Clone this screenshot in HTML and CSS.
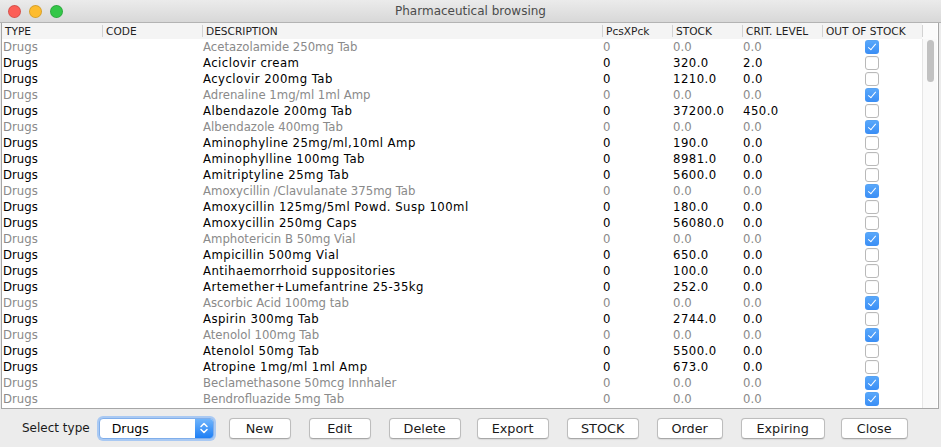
FILE: index.html
```html
<!DOCTYPE html>
<html>
<head>
<meta charset="utf-8">
<title>Pharmaceutical browsing</title>
<link rel="stylesheet" href="styles.css">
</head>
<body>
<div class="window">
  <div class="titlebar">
    <div class="lights">
      <span class="light red"></span>
      <span class="light yellow"></span>
      <span class="light green"></span>
    </div>
    <div class="title">Pharmaceutical browsing</div>
    <div class="lights spacer"></div>
  </div>

  <div class="table">
    <div class="thead-row">
      <div class="thead">
        <div class="th">TYPE</div>
        <div class="th sep">CODE</div>
        <div class="th sep">DESCRIPTION</div>
        <div class="th sep">PcsXPck</div>
        <div class="th sep">STOCK</div>
        <div class="th sep">CRIT. LEVEL</div>
        <div class="th sep">OUT OF STOCK</div>
      </div>
      <div class="corner"></div>
    </div>
    <div class="tbody-row">
      <div class="rows">
        <div class="row dim"><span>Drugs</span><span></span><span>Acetazolamide 250mg Tab</span><span>0</span><span>0.0</span><span>0.0</span><span class="chk"><i class="cb on"></i></span></div>
        <div class="row"><span>Drugs</span><span></span><span>Aciclovir cream</span><span>0</span><span>320.0</span><span>2.0</span><span class="chk"><i class="cb"></i></span></div>
        <div class="row"><span>Drugs</span><span></span><span>Acyclovir 200mg Tab</span><span>0</span><span>1210.0</span><span>0.0</span><span class="chk"><i class="cb"></i></span></div>
        <div class="row dim"><span>Drugs</span><span></span><span>Adrenaline 1mg/ml 1ml Amp</span><span>0</span><span>0.0</span><span>0.0</span><span class="chk"><i class="cb on"></i></span></div>
        <div class="row"><span>Drugs</span><span></span><span>Albendazole 200mg Tab</span><span>0</span><span>37200.0</span><span>450.0</span><span class="chk"><i class="cb"></i></span></div>
        <div class="row dim"><span>Drugs</span><span></span><span>Albendazole 400mg Tab</span><span>0</span><span>0.0</span><span>0.0</span><span class="chk"><i class="cb on"></i></span></div>
        <div class="row"><span>Drugs</span><span></span><span>Aminophyline 25mg/ml,10ml Amp</span><span>0</span><span>190.0</span><span>0.0</span><span class="chk"><i class="cb"></i></span></div>
        <div class="row"><span>Drugs</span><span></span><span>Aminophylline 100mg Tab</span><span>0</span><span>8981.0</span><span>0.0</span><span class="chk"><i class="cb"></i></span></div>
        <div class="row"><span>Drugs</span><span></span><span>Amitriptyline 25mg Tab</span><span>0</span><span>5600.0</span><span>0.0</span><span class="chk"><i class="cb"></i></span></div>
        <div class="row dim"><span>Drugs</span><span></span><span>Amoxycillin /Clavulanate 375mg Tab</span><span>0</span><span>0.0</span><span>0.0</span><span class="chk"><i class="cb on"></i></span></div>
        <div class="row"><span>Drugs</span><span></span><span>Amoxycillin 125mg/5ml Powd. Susp 100ml</span><span>0</span><span>180.0</span><span>0.0</span><span class="chk"><i class="cb"></i></span></div>
        <div class="row"><span>Drugs</span><span></span><span>Amoxycillin 250mg Caps</span><span>0</span><span>56080.0</span><span>0.0</span><span class="chk"><i class="cb"></i></span></div>
        <div class="row dim"><span>Drugs</span><span></span><span>Amphotericin B 50mg Vial</span><span>0</span><span>0.0</span><span>0.0</span><span class="chk"><i class="cb on"></i></span></div>
        <div class="row"><span>Drugs</span><span></span><span>Ampicillin 500mg Vial</span><span>0</span><span>650.0</span><span>0.0</span><span class="chk"><i class="cb"></i></span></div>
        <div class="row"><span>Drugs</span><span></span><span>Antihaemorrhoid suppositories</span><span>0</span><span>100.0</span><span>0.0</span><span class="chk"><i class="cb"></i></span></div>
        <div class="row"><span>Drugs</span><span></span><span>Artemether+Lumefantrine 25-35kg</span><span>0</span><span>252.0</span><span>0.0</span><span class="chk"><i class="cb"></i></span></div>
        <div class="row dim"><span>Drugs</span><span></span><span>Ascorbic Acid 100mg tab</span><span>0</span><span>0.0</span><span>0.0</span><span class="chk"><i class="cb on"></i></span></div>
        <div class="row"><span>Drugs</span><span></span><span>Aspirin 300mg Tab</span><span>0</span><span>2744.0</span><span>0.0</span><span class="chk"><i class="cb"></i></span></div>
        <div class="row dim"><span>Drugs</span><span></span><span>Atenolol 100mg Tab</span><span>0</span><span>0.0</span><span>0.0</span><span class="chk"><i class="cb on"></i></span></div>
        <div class="row"><span>Drugs</span><span></span><span>Atenolol 50mg Tab</span><span>0</span><span>5500.0</span><span>0.0</span><span class="chk"><i class="cb"></i></span></div>
        <div class="row"><span>Drugs</span><span></span><span>Atropine 1mg/ml 1ml Amp</span><span>0</span><span>673.0</span><span>0.0</span><span class="chk"><i class="cb"></i></span></div>
        <div class="row dim"><span>Drugs</span><span></span><span>Beclamethasone 50mcg Innhaler</span><span>0</span><span>0.0</span><span>0.0</span><span class="chk"><i class="cb on"></i></span></div>
        <div class="row dim"><span>Drugs</span><span></span><span>Bendrofluazide 5mg Tab</span><span>0</span><span>0.0</span><span>0.0</span><span class="chk"><i class="cb on"></i></span></div>
        <div class="row dim"><span></span><span></span><span></span><span></span><span></span><span></span><span class="chk"><i class="cb on"></i></span></div>
      </div>
      <div class="vscroll"><div class="thumb"></div></div>
    </div>
  </div>

  <div class="bottombar">
    <span class="label">Select type</span>
    <div class="select">
      <span class="select-text">Drugs</span>
      <span class="select-arrow">
        <svg width="10" height="14" viewBox="0 0 10 14"><path d="M2 5.5 L5 2.5 L8 5.5 M2 8.5 L5 11.5 L8 8.5" fill="none" stroke="#fff" stroke-width="1.5" stroke-linecap="round" stroke-linejoin="round"/></svg>
      </span>
    </div>
    <button class="btn w62 first">New</button>
    <button class="btn w62">Edit</button>
    <button class="btn w72">Delete</button>
    <button class="btn w72 g16">Export</button>
    <button class="btn w72">STOCK</button>
    <button class="btn w66">Order</button>
    <button class="btn w84">Expiring</button>
    <button class="btn w67 g16">Close</button>
  </div>
</div>
</body>
</html>
```

FILE: styles.css
```css
html, body {
  margin: 0;
  padding: 0;
  background: #ececec;
}
body {
  width: 941px;
  height: 447px;
  overflow: hidden;
  font-family: "DejaVu Sans", sans-serif;
}
.window {
  display: flex;
  flex-direction: column;
  height: 447px;
}

/* title bar */
.titlebar {
  height: 22px;
  flex: none;
  display: flex;
  align-items: center;
  justify-content: space-between;
  background: linear-gradient(#ebebeb, #d8d8d8);
  border-bottom: 1px solid #b3b3b3;
}
.lights {
  display: flex;
  gap: 8px;
  padding-left: 8px;
  width: 60px;
}
.light {
  width: 11px;
  height: 11px;
  border-radius: 50%;
  border: 0.5px solid rgba(0,0,0,0.15);
}
.red { background: #fc5f57; }
.yellow { background: #fdbc2f; }
.green { background: #33c748; }
.title {
  font-size: 12px;
  color: #4b4b4b;
}

/* table */
.table {
  flex: none;
  height: 385px;
  margin-left: 1px;
  width: 936px;
  border-left: 1px solid #a6a6a6;
  border-right: 1px solid #a6a6a6;
  border-bottom: 1px solid #a6a6a6;
  background: #fff;
  display: flex;
  flex-direction: column;
  overflow: hidden;
}
.thead-row {
  display: flex;
  height: 16px;
  flex: none;
}
.thead {
  width: 920px;
  display: grid;
  grid-template-columns: 100px 100px 400px 70px 70px 80px 100px;
  background: #f4f4f4;
}
.th {
  font-size: 10.6px;
  color: #1e1e1e;
  line-height: 16px;
  padding-left: 3px;
  white-space: nowrap;
  overflow: hidden;
}
.th.sep {
  background: linear-gradient(#d3d3d3, #d3d3d3) left center / 1px 12px no-repeat;
  padding-left: 4px;
}
.corner {
  width: 15px;
  background: linear-gradient(#d3d3d3, #d3d3d3) left center / 1px 12px no-repeat, #fbfbfb;
}
.tbody-row {
  display: flex;
  flex: 1;
  min-height: 0;
}
.rows {
  width: 920px;
  overflow: hidden;
}
.row {
  display: grid;
  grid-template-columns: 100px 100px 400px 70px 70px 80px 100px;
  height: 16px;
  line-height: 16px;
  font-size: 11.7px;
  color: #000;
}
.row span {
  padding-left: 1px;
  white-space: nowrap;
  overflow: hidden;
}
.row:not(.dim) span + span {
  letter-spacing: 0.45px;
}
.row.dim { color: #8a8a8a; }
.row span.chk {
  display: flex;
  align-items: center;
  justify-content: center;
  padding-left: 0;
}
.cb {
  display: block;
  box-sizing: border-box;
  width: 14px;
  height: 14px;
  border-radius: 3px;
  border: 1px solid #b9b9b9;
  background: #fff;
  box-shadow: inset 0 1px 0 rgba(0,0,0,0.03);
}
.cb.on {
  border: none;
  background: linear-gradient(#5aa9fb, #3a8ef5);
  display: flex;
  align-items: center;
  justify-content: center;
}
.cb.on::after {
  content: "";
  width: 3px;
  height: 7px;
  border-right: 1.5px solid #fff;
  border-bottom: 1.5px solid #fff;
  transform: translate(0, -1px) rotate(40deg);
}
.vscroll {
  width: 15px;
  box-sizing: border-box;
  border-left: 1px solid #e6e6e6;
  background: #f9f9f9;
  padding: 1px 0 0 4px;
}
.thumb {
  width: 7px;
  height: 42px;
  border-radius: 4px;
  background: #c1c1c1;
}

/* bottom bar */
.bottombar {
  flex: 1;
  display: flex;
  align-items: center;
  padding-left: 22px;
  font-size: 12px;
  color: #1a1a1a;
}
.label {
  margin-right: 9px;
}
.select {
  box-sizing: border-box;
  width: 115px;
  height: 21px;
  display: flex;
  align-items: stretch;
  border: 1px solid #80aeea;
  border-radius: 4px;
  box-shadow: 0 0 0 2px #a9c9f3;
  background: #fff;
  overflow: hidden;
}
.select-text {
  flex: 1;
  padding-left: 12px;
  line-height: 19px;
  font-size: 12.5px;
  color: #000;
}
.select-arrow {
  width: 18px;
  display: flex;
  align-items: center;
  justify-content: center;
  background: linear-gradient(#6fb4fb, #1e7ff5);
}
.btn {
  box-sizing: border-box;
  height: 21px;
  margin-left: 18px;
  padding: 0;
  font-family: "DejaVu Sans", sans-serif;
  font-size: 12.8px;
  color: #1a1a1a;
  background: #fff;
  border: 1px solid #bdbdbd;
  border-bottom-color: #a8a8a8;
  border-radius: 4px;
  box-shadow: 0 0.5px 1px rgba(0,0,0,0.08);
}
.btn.first { margin-left: 15px; }
.btn.g16 { margin-left: 16px; }
.w62 { width: 62px; }
.w66 { width: 66px; }
.w67 { width: 67px; }
.w72 { width: 72px; }
.w84 { width: 84px; }
```
